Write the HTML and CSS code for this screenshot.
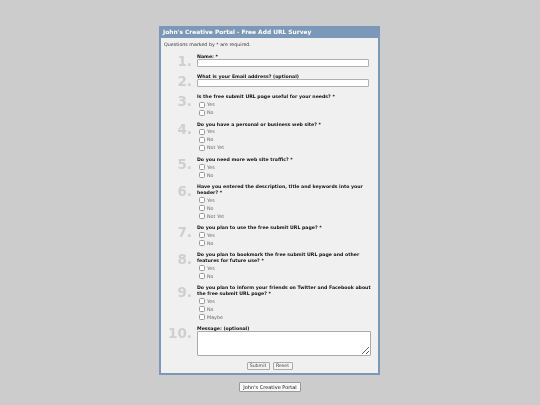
FILE: index.html
```html
<!DOCTYPE html>
<html lang="en">
<head>
<meta charset="utf-8">
<title>John's Creative Portal - Free Add URL Survey</title>
<link rel="stylesheet" href="styles.css">
</head>
<body>
<main class="panel">
  <h1 class="title">John's Creative Portal - Free Add URL Survey</h1>
  <form class="survey">
    <p class="note">Questions marked by * are required.</p>
    <div class="q q-text"><span class="num">1.</span><div class="field"><label class="label">Name: *</label><input class="input" type="text"></div></div>
    <div class="q q-text"><span class="num">2.</span><div class="field"><label class="label">What is your Email address? (optional)</label><input class="input" type="text"></div></div>
    <div class="q"><span class="num">3.</span><div class="field"><div class="label">Is the free submit URL page useful for your needs? *</div>
      <label class="opt"><input type="checkbox">Yes</label><label class="opt"><input type="checkbox">No</label></div></div>
    <div class="q"><span class="num">4.</span><div class="field"><div class="label">Do you have a personal or business web site? *</div>
      <label class="opt"><input type="checkbox">Yes</label><label class="opt"><input type="checkbox">No</label><label class="opt"><input type="checkbox">Not Yet</label></div></div>
    <div class="q"><span class="num">5.</span><div class="field"><div class="label">Do you need more web site traffic? *</div>
      <label class="opt"><input type="checkbox">Yes</label><label class="opt"><input type="checkbox">No</label></div></div>
    <div class="q"><span class="num">6.</span><div class="field"><div class="label">Have you entered the description, title and keywords into your header? *</div>
      <label class="opt"><input type="checkbox">Yes</label><label class="opt"><input type="checkbox">No</label><label class="opt"><input type="checkbox">Not Yet</label></div></div>
    <div class="q"><span class="num">7.</span><div class="field"><div class="label">Do you plan to use the free submit URL page? *</div>
      <label class="opt"><input type="checkbox">Yes</label><label class="opt"><input type="checkbox">No</label></div></div>
    <div class="q"><span class="num">8.</span><div class="field"><div class="label">Do you plan to bookmark the free submit URL page and other features for future use? *</div>
      <label class="opt"><input type="checkbox">Yes</label><label class="opt"><input type="checkbox">No</label></div></div>
    <div class="q"><span class="num">9.</span><div class="field"><div class="label">Do you plan to inform your friends on Twitter and Facebook about the free submit URL page? *</div>
      <label class="opt"><input type="checkbox">Yes</label><label class="opt"><input type="checkbox">No</label><label class="opt"><input type="checkbox">Maybe</label></div></div>
    <div class="q q-msg"><span class="num">10.</span><div class="field"><label class="label label-tight">Message: (optional)</label><textarea class="area"></textarea></div></div>
    <div class="actions"><button class="btn btn-submit" type="button">Submit</button><button class="btn btn-reset" type="button">Reset</button></div>
  </form>
</main>
<div class="foot"><button class="btn btn-foot" type="button">John's Creative Portal</button></div>
</body>
</html>
```
FILE: styles.css
```css
* { box-sizing: border-box; }
html, body { height: 100%; }
body {
  margin: 0;
  padding-top: 26px;
  background: #cccccc;
  font-family: "DejaVu Sans", Verdana, sans-serif;
  color: #222;
  overflow: hidden;
}
.panel {
  width: 221px;
  height: 349px;
  margin-left: 159px;
  border: 2px solid #7b98b8;
  border-top: 0;
  background: #f0f0f0;
  filter: blur(.3px);
}
.title {
  margin: 0 -2px;
  height: 12px;
  padding-left: 4px;
  background: #7b98b8;
  color: #fff;
  font-size: 5.9px;
  line-height: 13px;
  font-weight: bold;
  white-space: nowrap;
}
.note {
  margin: 4px 0 6.75px 3px;
  font-size: 4.77px;
  line-height: 5.5px;
  color: #333;
}
.q {
  display: grid;
  grid-template-columns: 36px 174px;
  margin-bottom: 5px;
}
.q-text { margin-bottom: 7px; }
.num {
  height: 12px;
  padding-right: 5px;
  text-align: right;
  font-size: 13.5px;
  font-weight: bold;
  line-height: 15.5px;
  color: #cfcfcf;
}
.field { display: flex; flex-direction: column; }
.label {
  display: block;
  margin-bottom: .85px;
  font-size: 4.67px;
  line-height: 5.5px;
  font-weight: bold;
  color: #111;
}
label.label, .label-tight { margin-bottom: -.5px; }
.input {
  display: block;
  width: 172px;
  height: 8px;
  margin: 0;
  padding: 0;
  background: #fff;
  border: 1px solid #b0b0b0;
  border-radius: 1px;
}
.opt {
  display: flex;
  align-items: center;
  height: 8px;
  font-size: 4.8px;
  color: #666;
}
.opt input {
  appearance: none;
  width: 6px;
  height: 6px;
  margin: 0 2.5px 0 1.5px;
  border: 1px solid #999;
  border-radius: 1.5px;
  background: #fff;
}
.area {
  display: block;
  width: 174px;
  height: 25px;
  margin: 0;
  padding: 0;
  background: #fff;
  border: 1px solid #aaa;
  border-radius: 1px;
}
.q-msg { margin-bottom: 6px; }
.actions { display: flex; justify-content: center; gap: 3px; }
.btn {
  height: 8px;
  padding: 0;
  font-family: "DejaVu Sans", Verdana, sans-serif;
  font-size: 4.7px;
  line-height: 6px;
  color: #444;
  background: #f4f4f4;
  border: 1px solid #aaa;
  border-radius: 1px;
}
.btn-submit { width: 23px; }
.btn-reset { width: 20px; }
.foot { display: flex; justify-content: center; margin-top: 7px; filter: blur(.3px); }
.btn-foot { width: 62px; height: 10px; color: #111; font-size: 5px; background: #fafafa; border-color: #999; }
```
